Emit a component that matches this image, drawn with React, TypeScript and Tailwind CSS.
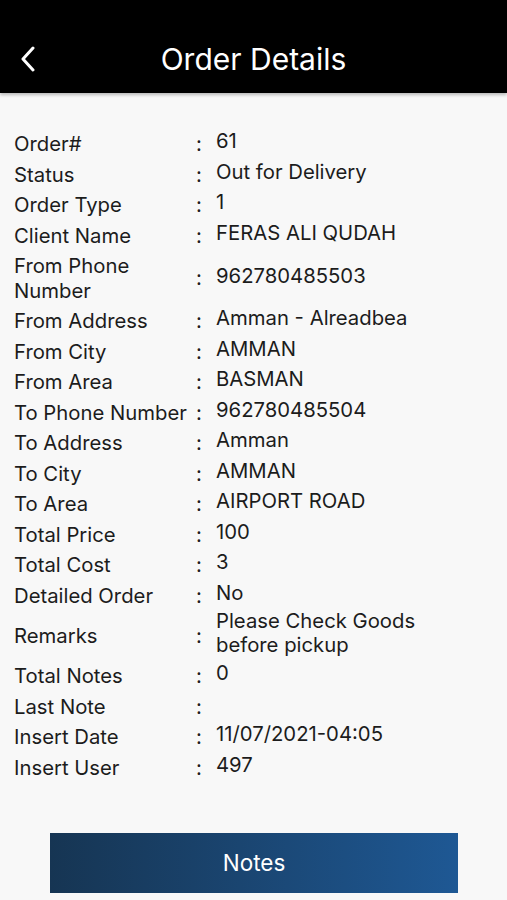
import React from "react";

const rows: { label: string; value: string; tight?: boolean }[] = [
  { label: "Order#", value: "61" },
  { label: "Status", value: "Out for Delivery" },
  { label: "Order Type", value: "1" },
  { label: "Client Name", value: "FERAS ALI QUDAH" },
  { label: "From Phone Number", value: "962780485503" },
  { label: "From Address", value: "Amman - Alreadbea" },
  { label: "From City", value: "AMMAN" },
  { label: "From Area", value: "BASMAN" },
  { label: "To Phone Number", value: "962780485504" },
  { label: "To Address", value: "Amman" },
  { label: "To City", value: "AMMAN" },
  { label: "To Area", value: "AIRPORT ROAD" },
  { label: "Total Price", value: "100" },
  { label: "Total Cost", value: "3" },
  { label: "Detailed Order", value: "No" },
  { label: "Remarks", value: "Please Check Goods before pickup", tight: true },
  { label: "Total Notes", value: "0" },
  { label: "Last Note", value: "" },
  { label: "Insert Date", value: "11/07/2021-04:05" },
  { label: "Insert User", value: "497" },
];

export default function App() {
  return (
    <div
      className="w-[507px] h-[900px] bg-[#f8f8f8] flex flex-col overflow-hidden"
      style={{ fontFamily: "Inter, 'Noto Sans', sans-serif" }}
    >
      <div className="h-[93px] shrink-0 bg-black flex items-end justify-center pb-[16px] relative shadow-[0_2px_3px_rgba(0,0,0,0.25)] z-10">
        <svg width="16" height="26" viewBox="0 0 16 26" className="absolute left-[20px] bottom-[21px]">
          <path d="M13 2 L3 13 L13 24" fill="none" stroke="white" strokeWidth="3" strokeLinecap="round" strokeLinejoin="round" />
        </svg>
        <div className="text-white text-[30px] font-normal leading-[36px]">
          Order Details
        </div>
      </div>
      <div className="pt-[36px] px-[14px] text-[#1c1c1c] text-[20.3px] leading-[24.5px]">
        {rows.map((r) => (
          <div key={r.label} className={r.tight ? "flex items-center py-[1px]" : "flex items-center py-[3px]"}>
            <div className="w-[180px] shrink-0">{r.label}</div>
            <div className="w-[10px] shrink-0 text-center">:</div>
            <div className="ml-[12px] flex-1 pr-[60px] leading-[24px] -translate-y-[3px]">{r.value}</div>
          </div>
        ))}
      </div>
      <div className="mt-[50px] mx-[50px] w-[408px] h-[60px] shrink-0 flex items-center justify-center bg-gradient-to-r from-[#163553] to-[#1e5894] text-white text-[22.5px] font-normal">
        Notes
      </div>
    </div>
  );
}
